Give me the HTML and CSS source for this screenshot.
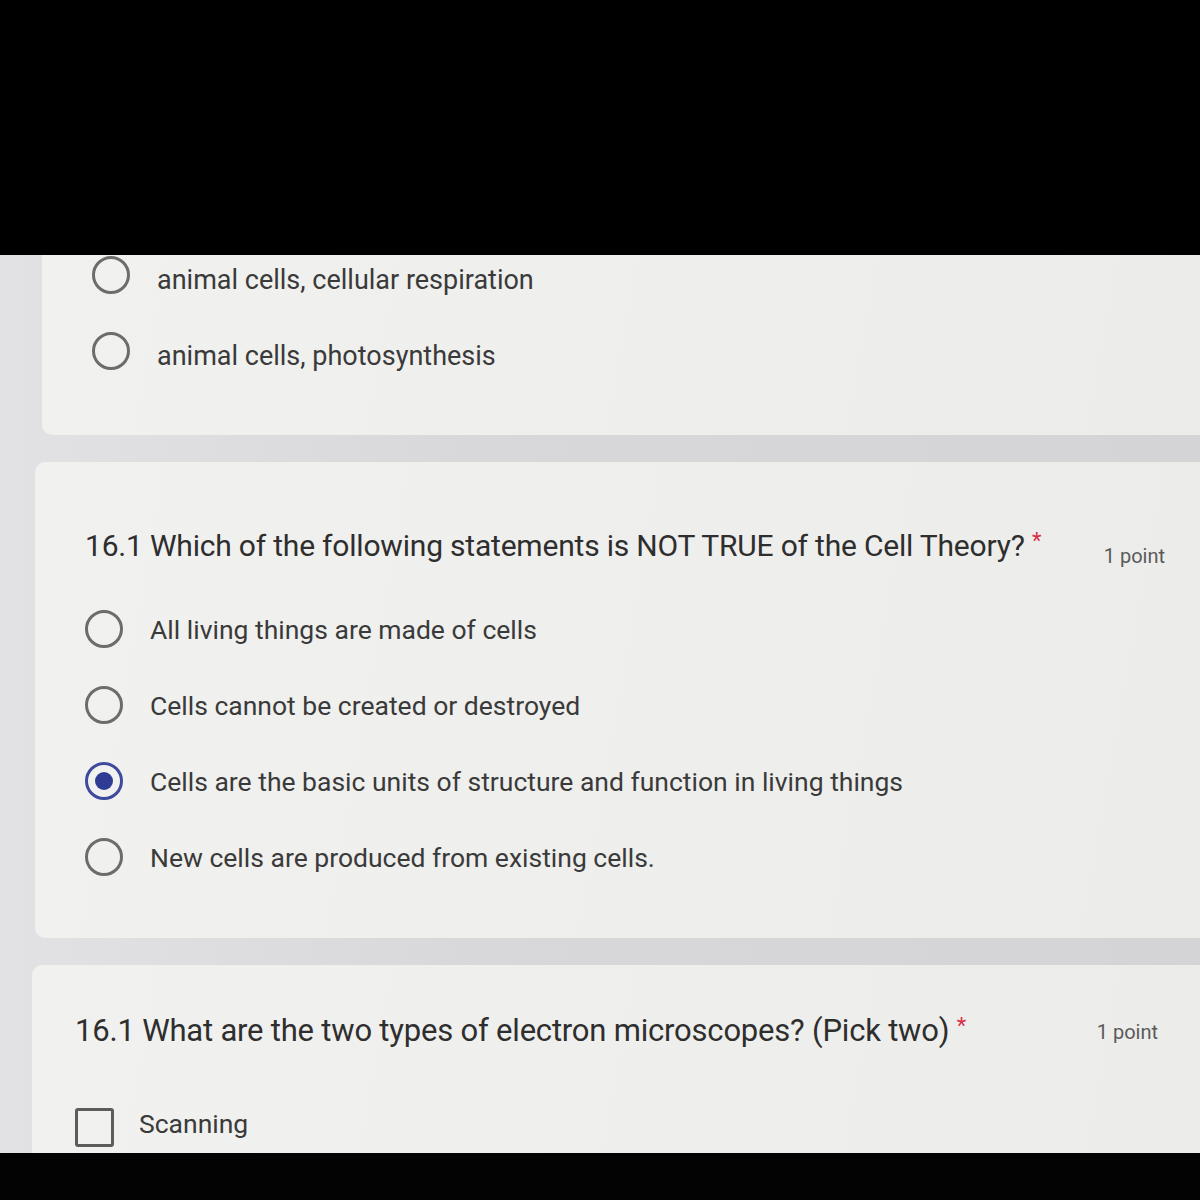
FILE: index.html
```html
<!DOCTYPE html>
<html lang="en">
<head>
  <meta charset="UTF-8" />
  <meta name="viewport" content="width=device-width, initial-scale=1.0"/>
  <title>Quiz</title>
  <link rel="stylesheet" href="styles.css">
</head>
<body>
  <div class="bar-top"></div>

  <div class="form">
    <div class="card card-prev">
      <div class="options options-cut">
        <label class="option"><span class="radio"></span><span class="label">animal cells, cellular respiration</span></label>
        <label class="option"><span class="radio"></span><span class="label">animal cells, photosynthesis</span></label>
      </div>
    </div>

    <div class="card card-q1">
      <div class="question">
        <div class="title">16.1 Which of the following statements is NOT TRUE of the Cell Theory? <span class="req">*</span></div>
        <div class="points">1 point</div>
      </div>
      <div class="options">
        <label class="option"><span class="radio"></span><span class="label">All living things are made of cells</span></label>
        <label class="option"><span class="radio"></span><span class="label">Cells cannot be created or destroyed</span></label>
        <label class="option"><span class="radio checked"></span><span class="label">Cells are the basic units of structure and function in living things</span></label>
        <label class="option"><span class="radio"></span><span class="label">New cells are produced from existing cells.</span></label>
      </div>
    </div>

    <div class="card card-q2">
      <div class="question">
        <div class="title">16.1 What are the two types of electron microscopes? (Pick two) <span class="req">*</span></div>
        <div class="points">1 point</div>
      </div>
      <div class="options">
        <label class="option"><span class="check"></span><span class="label">Scanning</span></label>
      </div>
    </div>
  </div>

  <div class="bar-bottom"></div>
</body>
</html>
```

FILE: styles.css
```css
body { margin: 0; background: #000; font-family: Roboto, "Liberation Sans", sans-serif; color: #3a3a3a; }
.bar-top { height: 255px; background: #000; }
.bar-bottom { height: 47px; background: #030303; }

.form { height: 898px; overflow: hidden; background: linear-gradient(90deg, #e2e2e4 0%, #d8d8da 40%, #d4d4d6 100%); display: flex; flex-direction: column; gap: 27px; }
.card { background: linear-gradient(100deg, #f1f1ef 0%, #eeeeec 60%, #ececea 100%); border-radius: 10px; flex: none; }

.card-prev { margin-left: 42px; height: 180px; border-radius: 0 0 0 10px; overflow: hidden; }
.card-q1 { margin-left: 35px; height: 476px; padding: 65px 35px 0 50px; box-sizing: border-box; border-radius: 10px 0 0 10px; }
.card-q2 { margin-left: 32px; flex: 1; padding: 47px 42px 0 43px; border-radius: 10px 0 0 0; }

.question { display: flex; justify-content: space-between; align-items: center; height: 36px; }
.title { font-size: 30px; color: #2e2e2e; letter-spacing: -0.2px; }
.req { color: #d9304a; font-size: 22px; vertical-align: 8px; }
.points { font-size: 20px; color: #5a5a5a; padding-top: 22px; }

.options { margin-top: 28px; }
.options-cut { margin-top: -18px; padding-left: 50px; }
.option { display: flex; align-items: center; height: 76px; gap: 27px; }
.label { font-size: 26.5px; color: #3a3a3a; }
.options-cut .label { font-size: 27px; padding-top: 10px; }

.radio { width: 32px; height: 32px; border: 3px solid #6c6c6c; border-radius: 50%; flex: none; display: flex; align-items: center; justify-content: center; }
.radio.checked { border-color: #3d4a9e; }
.radio.checked::after { content: ""; width: 18px; height: 18px; border-radius: 50%; background: #2f3c96; }

.card-q2 .title { font-size: 31px; }
.card-q2 .points { padding-top: 4px; }
.card-q2 .options { margin-top: 41px; }
.card-q2 .option { gap: 25px; }
.card-q2 .label { padding-bottom: 8px; }
.check { width: 33px; height: 33px; border: 3px solid #5c5c5c; border-radius: 3px; flex: none; }
```
